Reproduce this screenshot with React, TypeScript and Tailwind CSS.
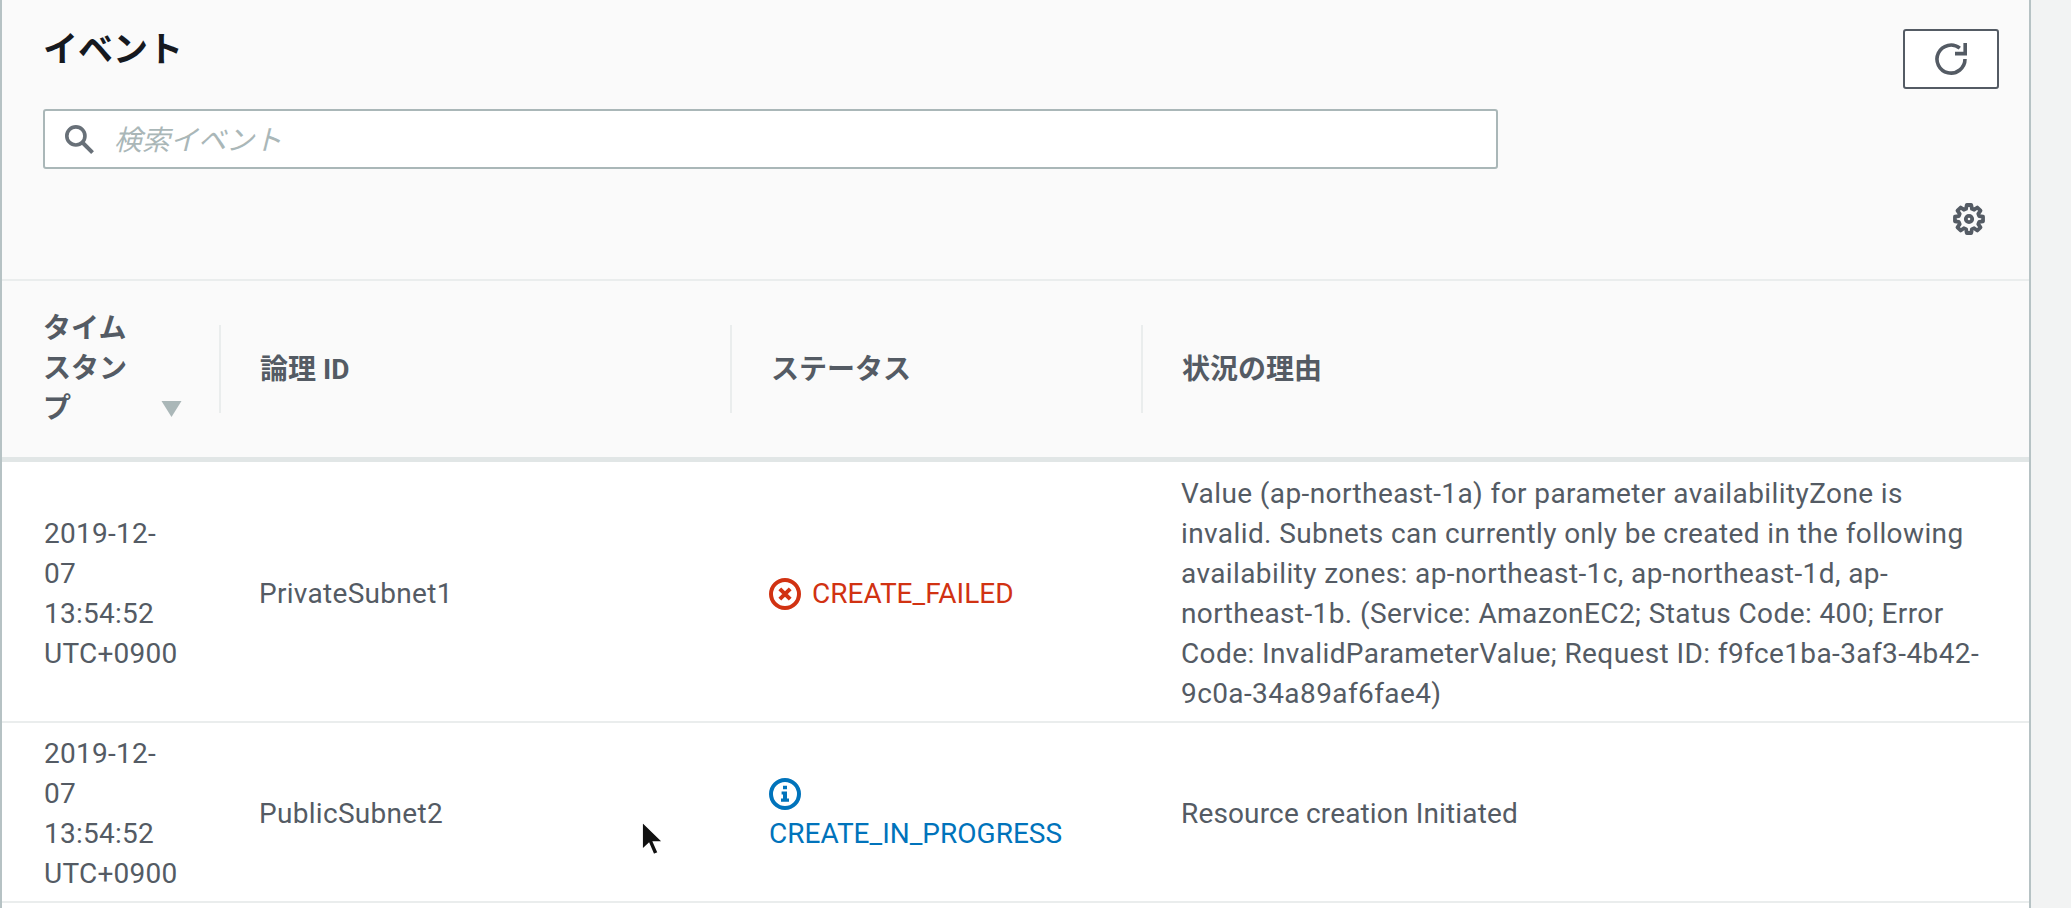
const gearPath = (() => {
  // 8 toothed outline, sampled round the centre of a 16 unit box
  const pts: string[] = []
  for (let i = 0; i < 8; i++) {
    const a = (i * Math.PI) / 4
    const at = (r: number, d: number) =>
      `${(8 + r * Math.sin(a + d)).toFixed(2)} ${(8 - r * Math.cos(a + d)).toFixed(2)}`
    pts.push(at(5.3, -0.28), at(7.1, -0.16), at(7.1, 0.16), at(5.3, 0.28))
  }
  return `M${pts.join('L')}Z`
})()

function RefreshIcon() {
  return (
    <svg viewBox="0 0 16 16" className="size-8 fill-none stroke-[#545b64] stroke-[1.8]">
      <path d="M15 8a7 7 0 1 1-2.6-5.4" />
      <path d="M15.1 0V5.3H10" />
    </svg>
  )
}

function GearIcon() {
  return (
    <svg viewBox="0 0 16 16" className="size-8 fill-none stroke-[#545b64] stroke-[1.9]" strokeLinejoin="round">
      <path d={gearPath} />
      <circle cx="8" cy="8" r="1.6" />
    </svg>
  )
}

function SearchIcon() {
  return (
    <svg viewBox="0 0 16 16" className="size-[29px] shrink-0 fill-none stroke-[#687078] stroke-2">
      <circle cx="6" cy="6" r="5" />
      <path d="M9.5 9.5L15.2 15.2" strokeWidth="2.2" />
    </svg>
  )
}

function ErrorIcon() {
  return (
    <svg viewBox="0 0 16 16" className="size-8 shrink-0 fill-none stroke-[#d13212] stroke-2">
      <circle cx="8" cy="8" r="7" />
      <path d="M5.4 5.4l5.2 5.2M10.6 5.4l-5.2 5.2" />
    </svg>
  )
}

function InfoIcon() {
  return (
    <svg viewBox="0 0 16 16" className="block size-8 shrink-0">
      <circle cx="8" cy="8" r="7" className="fill-none stroke-[#0073bb] stroke-2" />
      <path d="M7 3.9h2v1.7H7zM6.3 6.7H9v3.6h1v1.6H6v-1.6h1V8.2h-.7z" className="fill-[#0073bb]" />
    </svg>
  )
}

const headers = ['論理 ID', 'ステータス', '状況の理由']

const failedReason = [
  'Value (ap-northeast-1a) for parameter availabilityZone is',
  'invalid. Subnets can currently only be created in the following',
  'availability zones: ap-northeast-1c, ap-northeast-1d, ap-',
  'northeast-1b. (Service: AmazonEC2; Status Code: 400; Error',
  'Code: InvalidParameterValue; Request ID: f9fce1ba-3af3-4b42-',
  '9c0a-34a89af6fae4)',
]

function Row({
  name,
  status,
  reason,
  pad,
  reasonClass,
}: {
  name: string
  status: React.ReactNode
  reason: string[]
  pad: string
  reasonClass: string
}) {
  return (
    <div className={`grid grid-cols-[217px_511px_411px_1fr] items-center border-b-2 border-[#eaeded] pb-[7px] ${pad}`}>
      <div className="pl-[42px] pr-[33px] tracking-[0.25px]">2019-12-07 13:54:52 UTC+0900</div>
      <div className="pl-[40px] tracking-[0.3px]">{name}</div>
      <div className="pl-[39px]">{status}</div>
      <div className={`whitespace-nowrap pl-[40px] ${reasonClass}`}>
        {reason.map((line) => (
          <div key={line}>{line}</div>
        ))}
      </div>
    </div>
  )
}

export default function App() {
  return (
    <div className="relative h-[908px] w-full overflow-hidden bg-[#f2f3f3] font-['Roboto','Noto_Sans_CJK_JP',sans-serif] text-[28px] leading-[40px] text-[#545b64]">
      <div className="h-full w-[2031px] border-x-2 border-[#b6c2c4] bg-white">
        <div className="bg-[#fafafa]">
          <div className="border-b-2 border-[#eaeded] pb-[44px] pl-[41px] pt-[29px]">
            <div className="flex items-start justify-between pr-[30px]">
              <div className="w-[1455px]">
                <h1 className="pt-[2px] text-[35px] font-bold leading-[40px] text-[#16191f]">イベント</h1>
                <div className="mt-[38px] flex h-[60px] items-center gap-[20px] rounded-[3px] border-2 border-[#aab7b8] bg-white pl-[20px]">
                  <SearchIcon />
                  <input
                    className="min-w-0 flex-1 bg-transparent pt-[3px] text-[28px] italic outline-none placeholder:text-[#aab7b8]"
                    placeholder="検索イベント"
                  />
                </div>
              </div>
              <button
                type="button"
                className="flex h-[60px] w-[96px] items-center justify-center rounded-[3px] border-2 border-[#545b64] bg-white"
                aria-label="Refresh"
              >
                <RefreshIcon />
              </button>
            </div>
            <div className="mt-[34px] flex justify-end pr-[44px]">
              <GearIcon />
            </div>
          </div>

          <div className="grid h-[181px] grid-cols-[217px_511px_411px_1fr] items-center border-b-[5px] border-[#e1e6e6] font-bold">
            <div className="relative pl-[41px] pr-[80px]">
              タイムスタンプ
              <svg viewBox="0 0 20 16" className="absolute bottom-[12px] right-[37px] h-4 w-[21px] fill-[#aab7b8]">
                <path d="M0 0h20L10 16z" />
              </svg>
            </div>
            {headers.map((h) => (
              <div key={h} className="flex h-[88px] items-center border-l-2 border-[#eaeded] pl-[39px] pt-[2px]">
                {h}
              </div>
            ))}
          </div>
        </div>

        <Row
          pad="pt-[12px]"
          name="PrivateSubnet1"
          status={
            <span className="flex items-center gap-[11px] text-[#d13212]">
              <ErrorIcon />
              CREATE_FAILED
            </span>
          }
          reason={failedReason}
          reasonClass="tracking-[0.4px]"
        />
        <Row
          pad="pt-[11px]"
          name="PublicSubnet2"
          status={
            <span className="block text-[#0073bb]">
              <span className="flex h-[40px] items-center">
                <InfoIcon />
              </span>
              CREATE_IN_PROGRESS
            </span>
          }
          reason={['Resource creation Initiated']}
          reasonClass="tracking-[0.15px]"
        />
      </div>

      {/* mouse pointer caught in the screenshot */}
      <svg viewBox="0 0 16 24" className="absolute left-[639px] top-[820px] h-[38px] w-[25px]">
        <path d="M2 1v18l4.3-4 3 7 3-1.3-3-6.8h6z" fill="#111" stroke="#fff" strokeWidth="1" />
      </svg>
    </div>
  )
}
